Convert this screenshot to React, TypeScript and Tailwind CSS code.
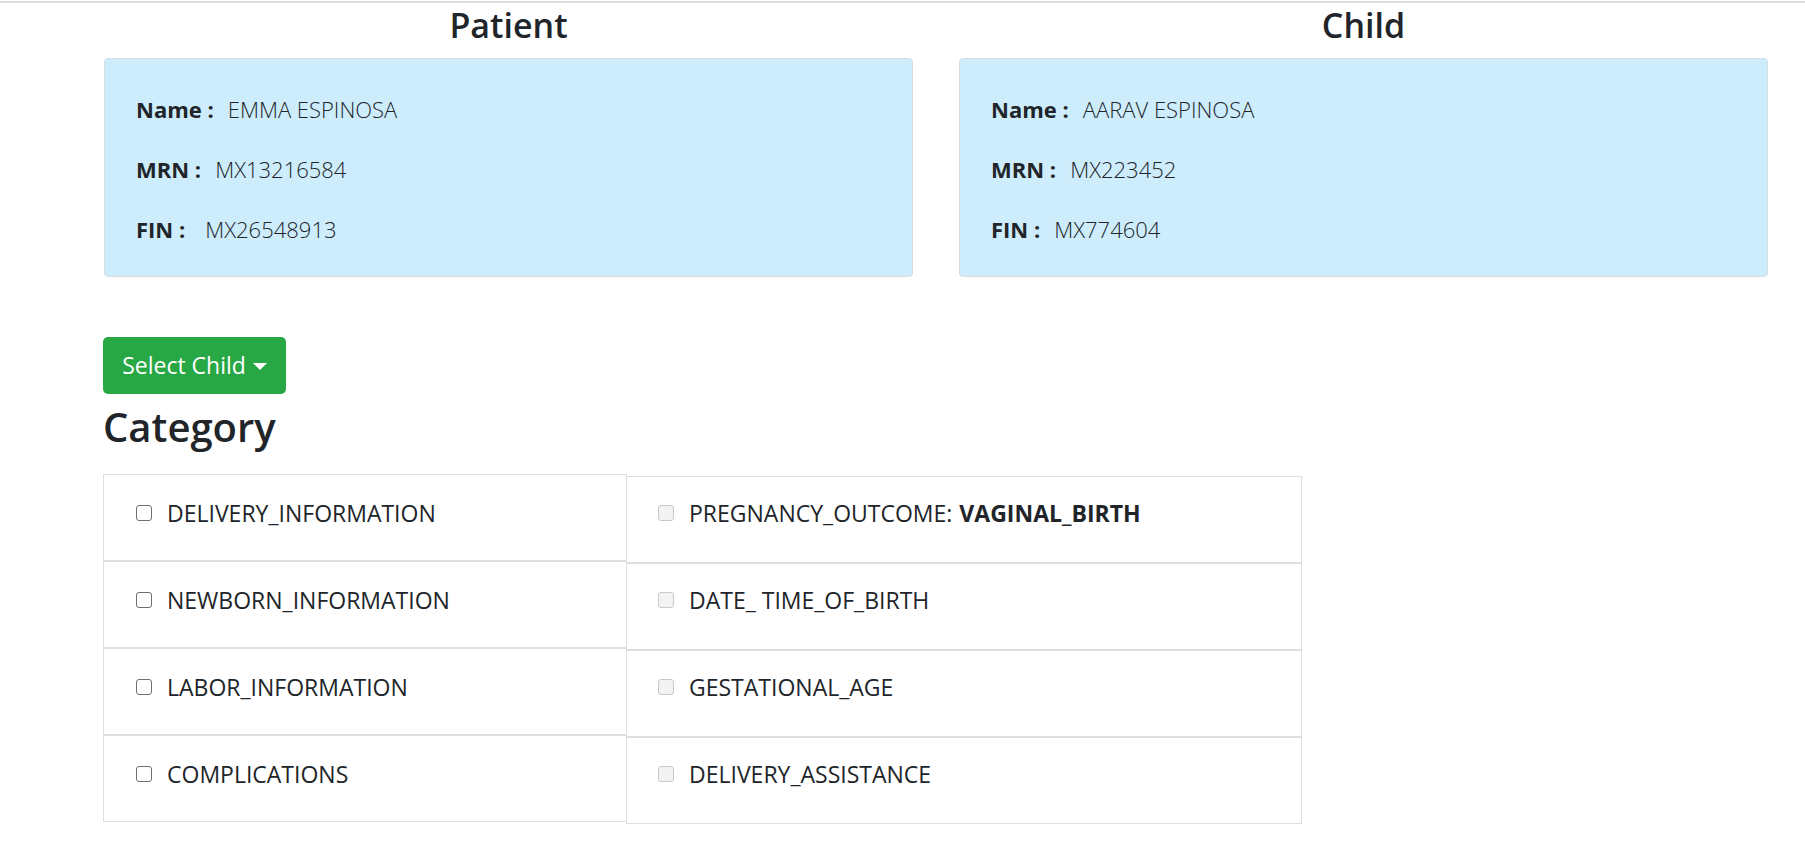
import React from 'react';

const FONT = { fontFamily: '"Open Sans", "Noto Sans", Arial, sans-serif' };

type Person = { title: string; name: string; mrn: string; fin: string; finGap: string };

const PEOPLE: Person[] = [
  { title: 'Patient', name: 'EMMA ESPINOSA', mrn: 'MX13216584', fin: 'MX26548913', finGap: 'ml-[20px]' },
  { title: 'Child', name: 'AARAV ESPINOSA', mrn: 'MX223452', fin: 'MX774604', finGap: 'ml-[14px]' },
];

const LEFT_ITEMS = ['DELIVERY_INFORMATION', 'NEWBORN_INFORMATION', 'LABOR_INFORMATION', 'COMPLICATIONS'];

const RIGHT_ITEMS: { label: string; value?: string }[] = [
  { label: 'PREGNANCY_OUTCOME:', value: 'VAGINAL_BIRTH' },
  { label: 'DATE_ TIME_OF_BIRTH' },
  { label: 'GESTATIONAL_AGE' },
  { label: 'DELIVERY_ASSISTANCE' },
];

const InfoCard: React.FC<{ person: Person }> = ({ person }) => (
  <div>
    <h3 className="mt-[2px] mb-[12px] text-center text-[34px] leading-[41px] font-semibold text-[#212529]">
      {person.title}
    </h3>
    <div className="rounded-[4px] border border-[#d9dcdf] bg-[#cdecfc] pl-[31px] pt-[34px] pb-[31px] text-[22px] leading-[32px] text-[#212529]">
      <div className="flex flex-col gap-[28px]">
        <div>
          <span className="font-bold">Name :</span>
          <span className="ml-[14px] font-light">{person.name}</span>
        </div>
        <div>
          <span className="font-bold">MRN :</span>
          <span className="ml-[14px] font-light">{person.mrn}</span>
        </div>
        <div>
          <span className="font-bold">FIN :</span>
          <span className={`${person.finGap} font-light`}>{person.fin}</span>
        </div>
      </div>
    </div>
  </div>
);

const App: React.FC = () => {
  return (
    <div className="min-h-screen bg-white text-[#212529]" style={FONT}>
      {/* top rule */}
      <div className="pt-px">
        <div className="h-[2px] bg-[#dcdce2]" />
      </div>

      <div className="grid grid-cols-2 gap-[46px] pl-[104px] pr-[37px]">
        {PEOPLE.map((p) => (
          <InfoCard key={p.title} person={p} />
        ))}
      </div>

      <div className="pl-[103px]">
        <button
          type="button"
          className="mt-[60px] flex h-[57px] w-[183px] items-center justify-center gap-[7px] rounded-[5px] bg-[#28a745] text-[23px] text-white"
        >
          <span>Select Child</span>
          <span className="mt-[2px] h-0 w-0 border-x-[7px] border-t-[7px] border-x-transparent border-t-white" />
        </button>

        <h1 className="mt-[9px] text-[40px] leading-[48px] font-semibold">Category</h1>

        <div className="mt-[23px] flex items-start">
          <div className="w-[524px]">
            {LEFT_ITEMS.map((item) => (
              <label
                key={item}
                className="flex items-center gap-[15px] border border-[#dfdfdf] pl-[32px] pt-[21px] pb-[30px] text-[23px] leading-[34px]"
              >
                <input
                  type="checkbox"
                  className="h-[16px] w-[16px] shrink-0 appearance-none rounded-[3px] border border-[#6f6f6f] bg-white"
                />
                <span>{item}</span>
              </label>
            ))}
          </div>
          <div className="-ml-px mt-[2px] w-[676px]">
            {RIGHT_ITEMS.map((item) => (
              <label
                key={item.label}
                className="flex items-center gap-[15px] border border-[#dfdfdf] pl-[31px] pt-[19px] pb-[32px] text-[23px] leading-[34px]"
              >
                <input
                  type="checkbox"
                  disabled
                  className="h-[16px] w-[16px] shrink-0 appearance-none rounded-[3px] border border-[#c9c9c9] bg-[#f3f3f3]"
                />
                <span>
                  {item.label}
                  {item.value && <b className="ml-[7px] font-bold">{item.value}</b>}
                </span>
              </label>
            ))}
          </div>
        </div>
      </div>
    </div>
  );
};

export default App;
